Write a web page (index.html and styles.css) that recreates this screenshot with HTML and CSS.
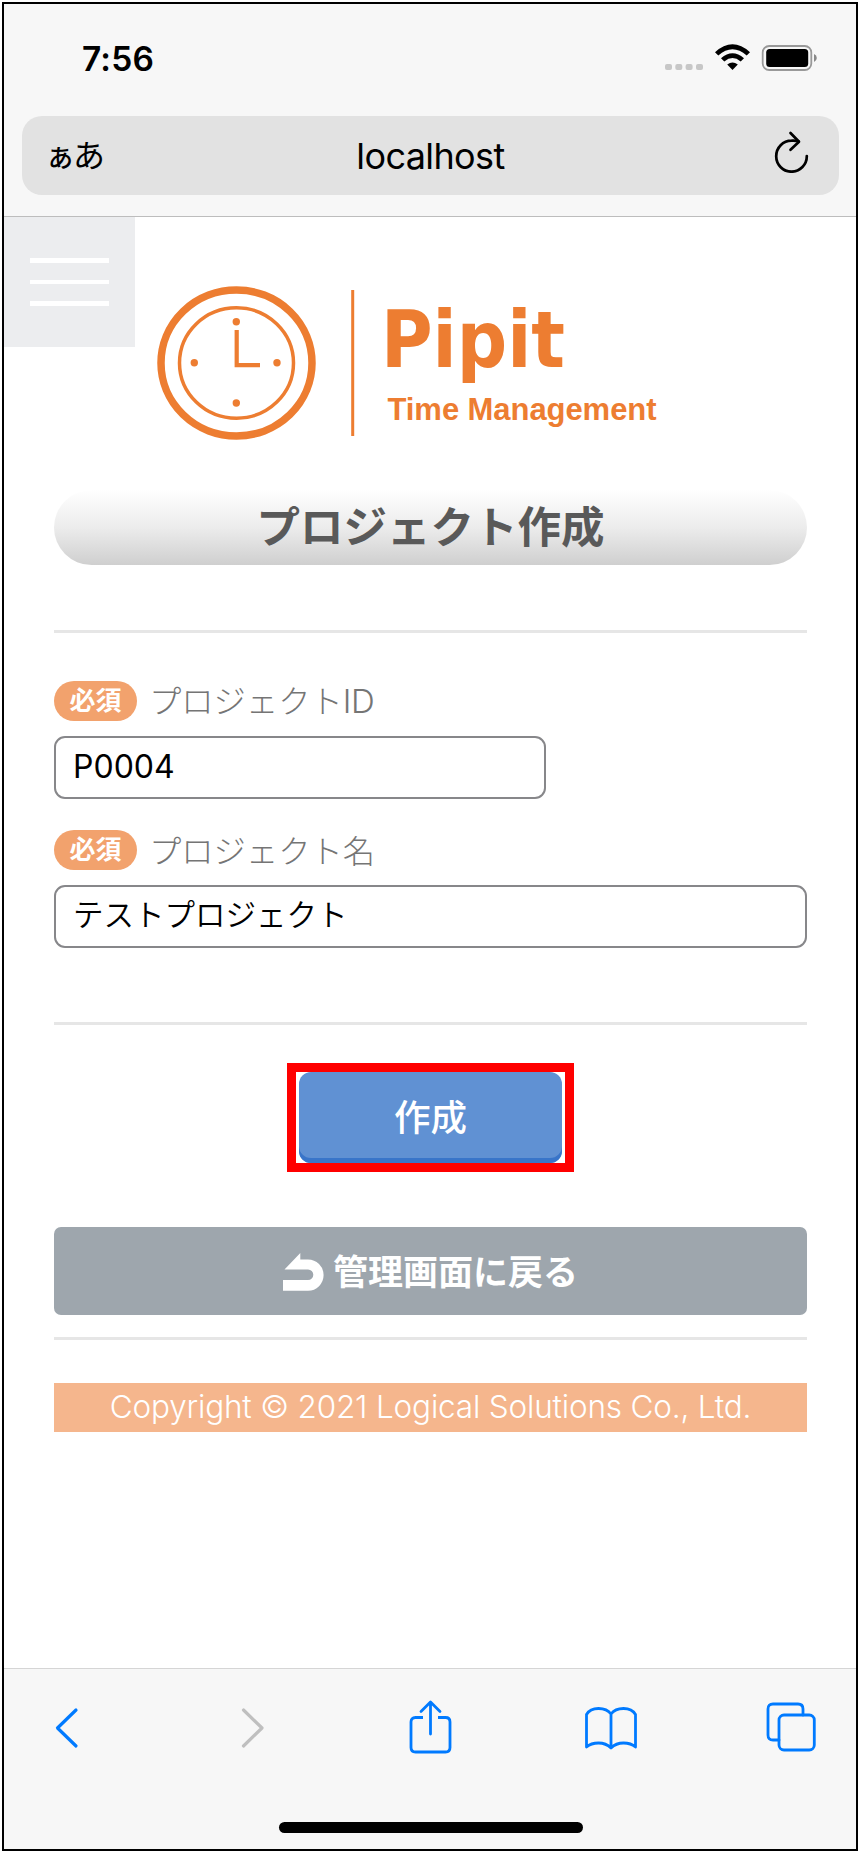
FILE: index.html
```html
<!DOCTYPE html>
<html lang="ja">
<head>
<meta charset="utf-8">
<title>プロジェクト作成</title>
<link rel="stylesheet" href="styles.css">
</head>
<body>
<div class="phone">
  <header class="browser-top">
    <div class="status">
      <span class="clock">7:56</span>
      <svg class="status-icons" width="154" height="28" viewBox="0 0 154 28">
        <g fill="#c7c7c7"><rect x="1" y="20" width="7" height="6" rx="2"/><rect x="11.300" y="20" width="7" height="6" rx="2"/><rect x="21.600" y="20" width="7" height="6" rx="2"/><rect x="32" y="20" width="7" height="6" rx="2"/></g>
        <path d="M51 8.200 Q68.500 -7.600 86 8.200 L82.700 11.500 Q68.500 -1 54.300 11.500 Z"/>
        <path d="M57 14.200 Q68.500 4.400 80 14.200 L76.700 17.500 Q68.500 10.600 60.300 17.500 Z"/>
        <path d="M63.200 20.600 Q68.500 16.200 73.800 20.600 L68.500 26 Z"/>
        <rect x="98.700" y="2" width="48.600" height="24" rx="6.500" fill="none" stroke="#999" stroke-width="1.800"/>
        <rect x="102.200" y="5" width="42" height="18" rx="3.500"/>
        <path d="M150 10 Q152.800 11.200 152.800 14 Q152.800 16.800 150 18 Z" fill="#888"/>
      </svg>
    </div>
    <div class="address">
      <span class="reader"><span class="reader-small">あ</span><span class="reader-large">あ</span></span>
      <span class="host">localhost</span>
      <svg class="reload" width="36" height="42" viewBox="0 0 36 42" fill="none" stroke="#000" stroke-width="2.700" stroke-linecap="round" stroke-linejoin="round">
        <path d="M32.800 25 A15.300 15.500 0 1 1 17.500 9.700 Q21 9.400 24.500 10.200"/><path d="M16.500 2 L25 10.700 L16.500 18.700"/>
      </svg>
    </div>
  </header>
  <main class="page">
    <div class="brand-row">
      <button class="menu" aria-label="menu"><i></i><i></i><i></i></button>
      <svg class="brand" width="520" height="160" viewBox="155 283 520 160">
        <g fill="none" stroke="#ed7d31">
          <ellipse cx="236.500" cy="363" rx="75.500" ry="73" stroke-width="7.500"/>
          <ellipse cx="236.500" cy="363" rx="57" ry="55.200" stroke-width="3.500"/>
          <path d="M236.700 330 V365.200 H260" stroke-width="4.200"/>
          <path d="M352.700 290 V436" stroke-width="3"/>
        </g>
        <g fill="#ed7d31">
          <circle cx="236.300" cy="321.700" r="3.700"/><circle cx="194.300" cy="362.800" r="3.700"/><circle cx="277" cy="362.800" r="3.700"/><circle cx="236.300" cy="403" r="3.700"/>
          <text class="brand-name" x="381" y="367" textLength="184" lengthAdjust="spacingAndGlyphs">Pipit</text>
          <text class="brand-sub" x="387.500" y="420" textLength="269" lengthAdjust="spacing">Time Management</text>
        </g>
      </svg>
    </div>
    <div class="content">
      <h1 class="title">プロジェクト作成</h1>
      <hr class="rule">
      <form class="form">
        <label class="label"><span class="badge">必須</span><span class="label-text">プロジェクト<span class="latin">ID</span></span></label>
        <div class="field field-id">P0004</div>
        <label class="label"><span class="badge">必須</span><span class="label-text">プロジェクト名</span></label>
        <div class="field field-name">テストプロジェクト</div>
      </form>
      <hr class="rule">
      <div class="highlight"><button class="create">作成</button></div>
      <button class="back">
        <svg width="41" height="38" viewBox="0 0 41 38"><path d="M17.300 0 V6.500 H25 A15.600 15.600 0 0 1 25 37.700 H0 V27 H25 A5.300 5.300 0 0 0 25 16.400 H1.500 Z" fill="#fff"/></svg>
        <span>管理画面に戻る</span>
      </button>
      <hr class="rule rule-last">
      <footer class="copyright"><span>Copyright © 2021 Logical Solutions Co., Ltd.</span></footer>
    </div>
  </main>
  <nav class="toolbar">
    <div class="tools">
      <svg width="24" height="42" viewBox="0 0 24 42" class="line"><path d="M21 3 L2.500 21 L21 39" stroke-width="3.200"/></svg>
      <svg width="24" height="42" viewBox="0 0 24 42" class="line disabled"><path d="M2.500 3 L21 21 L2.500 39" stroke-width="3.200"/></svg>
      <svg width="44" height="54" viewBox="0 0 44 54" class="line share"><path d="M14 17.500 H6.500 Q2 17.500 2 22 V47.500 Q2 52 6.500 52 H36.500 Q41 52 41 47.500 V22 Q41 17.500 36.500 17.500 H29" stroke-linecap="butt"/><path d="M21.500 34 V2.500 M12 11.500 L21.500 2 L31 11.500"/></svg>
      <svg width="54" height="46" viewBox="0 0 54 46" class="line book"><path d="M27 9 Q23 3.500 14.500 3.500 Q6 3.500 2.500 9.500 V42 Q7 38 14.500 38 Q22 38 27 43 Q32 38 39.500 38 Q47 38 51.500 42 V9.500 Q48 3.500 39.500 3.500 Q31 3.500 27 9 V42"/></svg>
      <svg width="50" height="50" viewBox="0 0 50 50" class="line tabs"><path d="M13 38 H7 Q2 38 2 33 V7 Q2 2 7 2 H32 Q37 2 37 7 V13"/><rect x="13" y="13" width="35.300" height="35" rx="5"/></svg>
    </div>
    <div class="home"></div>
  </nav>
</div>
</body>
</html>
```
FILE: styles.css
```css
* { box-sizing: border-box; }
body { margin: 0; padding: 2px 2px 1px; background: #fff; }
button { border: 0; padding: 0; font: inherit; }
svg { display: block; flex: none; }

.phone {
  width: 856px;
  height: 1849px;
  border: 2px solid #000;
  background: #fff;
  display: flex;
  flex-direction: column;
  font-family: Inter, "Noto Sans CJK JP", sans-serif;
  color: #000;
  white-space: nowrap;
}

.browser-top {
  height: 213px;
  background: #f7f7f7;
  border-bottom: 1px solid #bdbdbd;
  padding: 0 17px 0 18px;
}
.status {
  height: 112px;
  display: flex;
  justify-content: space-between;
  padding: 40px 21px 0 60px;
}
.clock { font-size: 33.500px; font-weight: 600; line-height: 30px; letter-spacing: 0.200px; }
.address {
  height: 79px;
  border-radius: 20px;
  background: #e2e2e2;
  display: grid;
  grid-template-columns: 120px 1fr 120px;
  align-items: center;
}
.reader { display: flex; align-items: baseline; padding-left: 26px; font-family: "Noto Sans CJK JP", sans-serif; line-height: 38px; margin-top: -2px; }
.reader-small { font-size: 25px; font-weight: 500; }
.reader-large { font-size: 32px; }
.host { text-align: center; font-size: 36px; line-height: 40px; letter-spacing: -0.600px; }
.reload { justify-self: end; margin: -7px 29px 0 0; }

.page { flex: 1; }
.brand-row { display: flex; height: 273px; }
.menu {
  width: 131px;
  height: 130px;
  background: #ecedef;
  padding: 41px 26px;
  display: flex;
  flex-direction: column;
  gap: 17px;
}
.menu i { height: 4.700px; width: 79px; background: #fff; flex: none; }
.brand { margin: 66px 0 0 20px; }
.brand-name { font: bold 78px "DejaVu Sans", sans-serif; }
.brand-sub { font: bold 31px "Liberation Sans", sans-serif; }

.content { padding: 0 49px 0 50px; display: flex; flex-direction: column; }
.title {
  margin: 0 0 65px;
  height: 75px;
  border-radius: 38px;
  background: linear-gradient(#fff, #ececec 50%, #cfcfcf);
  color: #595959;
  font: bold 43.500px/70px "Noto Sans CJK JP", sans-serif;
  text-align: center;
}
.rule { margin: 0; border: 0; width: 100%; height: 3px; background: #e6e6e6; }
.form { padding-top: 48px; height: 389px; }
.label { display: flex; align-items: center; height: 40px; gap: 12px; margin-bottom: 15px; }
.badge {
  width: 83px;
  height: 40px;
  border-radius: 20px;
  background: #f2a26d;
  color: #fff;
  font: bold 26px/36px "Noto Sans CJK JP", sans-serif;
  text-align: center;
}
.label-text { color: #757575; font: 300 32.300px/36px "Noto Sans CJK JP", sans-serif; padding-bottom: 3px; }
.latin { font: 300 33px/36px Inter, sans-serif; letter-spacing: -0.500px; }
.field { height: 63px; border: 2px solid #87878a; border-radius: 11px; padding-left: 17px; line-height: 57px; }
.field-id { width: 492px; font-size: 32px; margin-bottom: 31px; }
.field-name { font-family: "Noto Sans CJK JP", sans-serif; font-size: 30.500px; line-height: 53px; font-weight: 350; }

.highlight {
  align-self: flex-start;
  margin: 38px 0 55px 233px;
  width: 287px;
  height: 109px;
  border: 9px solid #f00;
  padding: 0 2px 0 3px;
}
.create {
  display: block;
  width: 263px;
  height: 91px;
  border-radius: 12px;
  background: #6091d3;
  box-shadow: inset 0 -5px 0 #3975c9;
  color: #fff;
  font: 500 36.500px/80px "Noto Sans CJK JP", sans-serif;
  padding-bottom: 4px;
}
.back {
  height: 88px;
  border-radius: 7px;
  background: #9ea6ad;
  color: #fff;
  font: bold 35px/80px "Noto Sans CJK JP", sans-serif;
  display: flex;
  justify-content: center;
  align-items: center;
  gap: 9px;
  padding: 0 0 2px;
}
.back svg { margin-top: 4px; }
.rule-last { margin: 22px 0 43px; }
.copyright {
  height: 48.500px;
  background: #f5b68d;
  color: #fff;
  font: 300 31.500px/48px Inter, sans-serif;
  letter-spacing: -0.180px;
  text-align: center;
}

.toolbar { height: 181px; background: #f7f7f7; border-top: 1px solid #d5d5d5; }
.tools { height: 153px; padding: 0 0 36px 51px; display: flex; align-items: center; }
.line { fill: none; stroke: #007aff; stroke-width: 2.800; stroke-linecap: round; stroke-linejoin: round; }
.disabled { stroke: #bfbfbf; margin-left: 162px; }
.share { margin: 0 0 2px 144px; }
.book { margin-left: 131px; }
.tabs { margin: 0 0 1px 128px; }
.home { width: 304px; height: 11px; border-radius: 6px; background: #000; margin-left: 275px; }
```
